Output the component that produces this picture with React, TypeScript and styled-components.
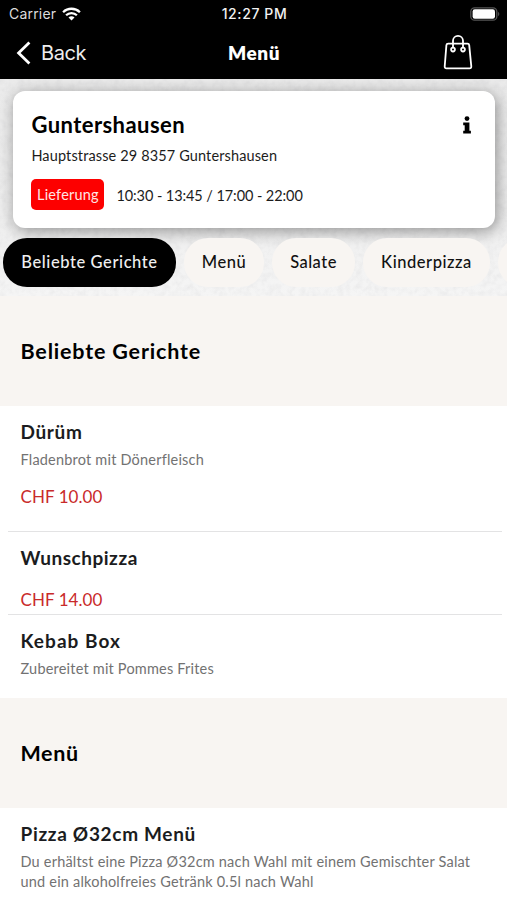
import React from 'react';
import styled, { createGlobalStyle } from 'styled-components';

const GlobalStyle = createGlobalStyle`
  * { box-sizing: border-box; }
  body { margin: 0; background: #fff; overflow: hidden; }
`;

const grain = `url("data:image/svg+xml,${encodeURIComponent(
  '<svg xmlns="http://www.w3.org/2000/svg" width="507" height="217"><filter id="n"><feTurbulence type="fractalNoise" baseFrequency="0.16" numOctaves="3" seed="4"/><feColorMatrix values="0 0 0 0 0.5  0 0 0 0 0.5  0 0 0 0 0.52  0.34 0 0 0 -0.13"/></filter><rect width="507" height="217" filter="url(#n)"/></svg>'
)}")`;

const Screen = styled.div`
  width: 507px;
  height: 900px;
  overflow: hidden;
  background: #fff;
  font-family: Lato, 'Open Sans', sans-serif;
  color: #000;
`;

const StatusBar = styled.div`
  display: grid;
  grid-template-columns: 1fr auto 1fr;
  align-items: center;
  height: 27px;
  padding: 0 7px 0 9px;
  background: #000;
  color: #f2f2f2;
  font: 400 14px/20px Inter, sans-serif;
`;

const Carrier = styled.div`
  display: flex;
  align-items: center;
  gap: 6px;
  letter-spacing: 0.2px;
  color: #dcdcdc;
`;

const Clock = styled.div`
  font-weight: 500;
  font-size: 14px;
  letter-spacing: 0.6px;
`;

const Battery = styled.svg`
  justify-self: end;
`;

const NavBar = styled.header`
  display: grid;
  grid-template-columns: 1fr auto 1fr;
  align-items: center;
  height: 52px;
  padding: 0 34px 1px 16px;
  background: #000;
  color: #fff;
`;

const Back = styled.div`
  display: flex;
  align-items: center;
  gap: 9px;
  font: 400 20px/26px Inter, sans-serif;
  letter-spacing: -0.4px;
  color: #ededed;
`;

const NavTitle = styled.h1`
  margin: 0 0 0 19px;
  font-size: 19px;
  line-height: 26px;
  font-weight: 800;
  letter-spacing: 0.55px;
`;

const BagIcon = styled.svg`
  justify-self: end;
  margin-bottom: 2px;
`;

const Hero = styled.section`
  height: 217px;
  padding-top: 12px;
  overflow: hidden;
  background: ${grain}, linear-gradient(#ebebeb, #eeeeee 60%, #f5f5f5);
`;

const StoreCard = styled.div`
  height: 137px;
  margin: 0 12px 0 13px;
  padding: 20px 23px 0 18.4px;
  border-radius: 12px;
  background: #fff;
  box-shadow: 2px 3px 16px rgba(0, 0, 0, 0.4);
`;

const CardTop = styled.div`
  display: flex;
  justify-content: space-between;
  align-items: center;
`;

const StoreName = styled.h2`
  margin: 0;
  font-size: 22px;
  line-height: 27px;
  font-weight: 700;
  letter-spacing: 0.44px;
`;

const Address = styled.p`
  margin: 8px 0 0;
  font-size: 14.5px;
  line-height: 20px;
  letter-spacing: 0.13px;
  color: #1c1c1c;
`;

const Hours = styled.div`
  display: flex;
  align-items: center;
  gap: 12px;
  margin-top: 13px;
  font-size: 14.5px;
  letter-spacing: -0.08px;
  color: #1c1c1c;
`;

const HoursText = styled.span`
  line-height: 20px;
  padding-top: 2px;
`;

const Badge = styled.span`
  width: 73px;
  height: 31px;
  border-radius: 5px;
  background: #fd0000;
  color: #ffe5e5;
  line-height: 31px;
  text-align: center;
  letter-spacing: 0.19px;
`;

const Chips = styled.nav`
  display: flex;
  gap: 8px;
  width: max-content;
  margin: 10px 0 0 3px;
`;

const Chip = styled.span<{ $width: number; $spacing: number; $active?: boolean }>`
  flex: none;
  width: ${(p) => p.$width}px;
  height: 49px;
  border-radius: 24px;
  background: ${(p) => (p.$active ? '#000' : '#f8f5f2')};
  color: ${(p) => (p.$active ? '#f0f0f0' : '#111')};
  font-size: 16.5px;
  line-height: 49px;
  font-weight: 500;
  letter-spacing: ${(p) => p.$spacing}px;
  text-align: center;
`;

const SectionHead = styled.h2<{ $spacing: number }>`
  display: flex;
  align-items: center;
  height: 110px;
  margin: 0;
  padding: 0 20.5px 1px;
  background: #f8f5f2;
  font-size: 21.5px;
  line-height: 28px;
  font-weight: 700;
  letter-spacing: ${(p) => p.$spacing}px;
`;

const Dish = styled.article<{ $height: number }>`
  height: ${(p) => p.$height}px;
  padding: 14px 20.5px 0;
`;

const Divider = styled.hr`
  height: 1px;
  margin: -1px 5px 0 8px;
  border: 0;
  background: #e3e3e4;
`;

const DishName = styled.h3<{ $spacing: number }>`
  margin: 0;
  font-size: 19px;
  line-height: 24px;
  font-weight: 700;
  letter-spacing: ${(p) => p.$spacing}px;
  color: #1b1c20;
`;

const Description = styled.p`
  margin: 6px 0 0;
  font-size: 14.5px;
  line-height: 20px;
  letter-spacing: 0.2px;
  color: #727272;
  white-space: pre-line;
`;

const Price = styled.p<{ $gap: number }>`
  margin: ${(p) => p.$gap}px 0 0;
  font-size: 17px;
  line-height: 22px;
  letter-spacing: 0.06px;
  color: #c92a2a;
`;

type DishData = {
  name: string;
  spacing: number;
  height: number;
  text?: string;
  price?: string;
  last?: boolean;
};

const sections: { title: string; spacing: number; dishes: DishData[] }[] = [
  {
    title: 'Beliebte Gerichte',
    spacing: 0.82,
    dishes: [
      { name: 'Dürüm', spacing: 0.65, height: 126, text: 'Fladenbrot mit Dönerfleisch', price: 'CHF 10.00' },
      { name: 'Wunschpizza', spacing: 0.52, height: 83, price: 'CHF 14.00' },
      { name: 'Kebab Box', spacing: 1.05, height: 83, text: 'Zubereitet mit Pommes Frites', last: true },
    ],
  },
  {
    title: 'Menü',
    spacing: 0.6,
    dishes: [
      {
        name: 'Pizza Ø32cm Menü',
        spacing: 0.68,
        height: 92,
        text: 'Du erhältst eine Pizza Ø32cm nach Wahl mit einem Gemischter Salat\nund ein alkoholfreies Getränk 0.5l nach Wahl',
        last: true,
      },
    ],
  },
];

export default function App() {
  return (
    <>
      <GlobalStyle />
      <Screen>
        <StatusBar>
          <Carrier>
            Carrier
            <svg width="19" height="14" viewBox="0 0 19 14" fill="none" stroke="#fff" strokeWidth="2.3">
              <path d="M1.1 5.2a12 12 0 0 1 16.8 0" />
              <path d="M4.1 8.3a7.7 7.7 0 0 1 10.8 0" />
              <path d="M9.5 13.6 6.5 10.6a4.2 4.2 0 0 1 6 0z" fill="#fff" stroke="none" />
            </svg>
          </Carrier>
          <Clock>12:27 PM</Clock>
          <Battery width="30" height="14" viewBox="0 0 30 14">
            <rect x="0.8" y="0.8" width="26" height="12.4" rx="3.8" fill="none" stroke="#555" strokeWidth="1.3" />
            <rect x="2.6" y="2.3" width="22.4" height="9.4" rx="2.2" fill="#fff" />
            <path d="M28.1 4.8c1.6.7 1.6 3.7 0 4.4z" fill="#555" />
          </Battery>
        </StatusBar>
        <NavBar>
          <Back>
            <svg width="16" height="24" viewBox="0 0 16 24" fill="none" stroke="#fff" strokeWidth="2.8">
              <path d="M13.4 1.4 2.6 12l10.8 10.6" />
            </svg>
            Back
          </Back>
          <NavTitle>Menü</NavTitle>
          <BagIcon width="30" height="36" viewBox="0 0 30 36" fill="none" stroke="#fff" strokeWidth="1.8">
            <path d="M5.1 9.6h19.4q1.5 0 1.7 1.5l2.1 21.3q.1 1.9-1.8 1.9h-23q-1.9 0-1.8-1.9L3.4 11.1q.2-1.5 1.7-1.5z" />
            <path d="M10 14V6.8a5 5 0 0 1 10 0V14" />
            <circle cx="10" cy="15.6" r="1.9" />
            <circle cx="20" cy="15.6" r="1.9" />
          </BagIcon>
        </NavBar>
        <Hero>
          <StoreCard>
            <CardTop>
              <StoreName>Guntershausen</StoreName>
              <svg width="10" height="18" viewBox="0 0 10 18">
                <circle cx="5" cy="2.6" r="2.4" />
                <path d="M1.2 6.6h6.2v8.2h1.5v2.6H1.2v-2.6h1.5V9.2H1.2z" />
              </svg>
            </CardTop>
            <Address>Hauptstrasse 29 8357 Guntershausen</Address>
            <Hours>
              <Badge>Lieferung</Badge>
              <HoursText>10:30 - 13:45 / 17:00 - 22:00</HoursText>
            </Hours>
          </StoreCard>
          <Chips>
            <Chip $width={173} $spacing={0.58} $active>Beliebte Gerichte</Chip>
            <Chip $width={80} $spacing={0.5}>Menü</Chip>
            <Chip $width={83} $spacing={0.48}>Salate</Chip>
            <Chip $width={127} $spacing={0.54}>Kinderpizza</Chip>
            <Chip $width={80} $spacing={0} />
          </Chips>
        </Hero>
        {sections.map((section) => (
          <section key={section.title}>
            <SectionHead $spacing={section.spacing}>{section.title}</SectionHead>
            {section.dishes.map((dish) => (
              <React.Fragment key={dish.name}>
                <Dish $height={dish.height}>
                  <DishName $spacing={dish.spacing}>{dish.name}</DishName>
                  {dish.text && <Description>{dish.text}</Description>}
                  {dish.price && <Price $gap={dish.text ? 16 : 19}>{dish.price}</Price>}
                </Dish>
                {!dish.last && <Divider />}
              </React.Fragment>
            ))}
          </section>
        ))}
      </Screen>
    </>
  );
}
